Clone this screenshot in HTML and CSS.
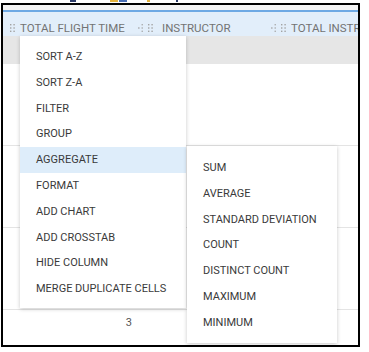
FILE: index.html
```html
<!DOCTYPE html>
<html lang="en">
<head>
    <meta charset="UTF-8">
    <meta name="viewport" content="width=device-width, initial-scale=1.0">
    <title>Column menu</title>
    <link rel="stylesheet" href="styles.css">
</head>
<body>
    <div class="topbits">
        <span class="bit dark" style="left: 70px; width: 6px;"></span>
        <span class="bit yellow" style="left: 110px; width: 8px;"></span>
        <span class="bit blue" style="left: 119px; width: 8px;"></span>
        <span class="bit yellow" style="left: 147px; width: 3px;"></span>
        <span class="bit dark" style="left: 176px; width: 2px;"></span>
    </div>

    <div class="frame">
        <div class="toolbar"></div>

        <div class="header">
            <div class="col">
                <svg class="drag" width="5" height="8" viewBox="0 0 5 8">
                    <rect x="0" y="0" width="1.4" height="1.4"/><rect x="3.4" y="0" width="1.4" height="1.4"/>
                    <rect x="0" y="3.3" width="1.4" height="1.4"/><rect x="3.4" y="3.3" width="1.4" height="1.4"/>
                    <rect x="0" y="6.6" width="1.4" height="1.4"/><rect x="3.4" y="6.6" width="1.4" height="1.4"/>
                </svg>
                <span>TOTAL FLIGHT TIME</span>
            </div>
            <div class="col">
                <svg class="resize" width="6" height="8" viewBox="0 0 6 8">
                    <rect x="0" y="3.4" width="1.6" height="1.2"/>
                    <rect x="3.6" y="0" width="1.2" height="1.4"/><rect x="3.6" y="3.3" width="1.2" height="1.4"/><rect x="3.6" y="6.6" width="1.2" height="1.4"/>
                </svg>
                <svg class="drag" width="5" height="8" viewBox="0 0 5 8">
                    <rect x="0" y="0" width="1.4" height="1.4"/><rect x="3.4" y="0" width="1.4" height="1.4"/>
                    <rect x="0" y="3.3" width="1.4" height="1.4"/><rect x="3.4" y="3.3" width="1.4" height="1.4"/>
                    <rect x="0" y="6.6" width="1.4" height="1.4"/><rect x="3.4" y="6.6" width="1.4" height="1.4"/>
                </svg>
                <span class="gap">INSTRUCTOR</span>
            </div>
            <div class="col last">
                <svg class="resize" width="6" height="8" viewBox="0 0 6 8">
                    <rect x="0" y="3.4" width="1.6" height="1.2"/>
                    <rect x="3.6" y="0" width="1.2" height="1.4"/><rect x="3.6" y="3.3" width="1.2" height="1.4"/><rect x="3.6" y="6.6" width="1.2" height="1.4"/>
                </svg>
                <svg class="drag" width="5" height="8" viewBox="0 0 5 8">
                    <rect x="0" y="0" width="1.4" height="1.4"/><rect x="3.4" y="0" width="1.4" height="1.4"/>
                    <rect x="0" y="3.3" width="1.4" height="1.4"/><rect x="3.4" y="3.3" width="1.4" height="1.4"/>
                    <rect x="0" y="6.6" width="1.4" height="1.4"/><rect x="3.4" y="6.6" width="1.4" height="1.4"/>
                </svg>
                <span class="clip">TOTAL INSTRUCTOR TIME</span>
            </div>
        </div>

        <div class="group-row"></div>
        <div class="row"></div>
        <div class="row"></div>
        <div class="row"></div>
        <div class="row">
            <div class="cell num">3</div>
        </div>

        <ul class="menu main-menu">
            <li>SORT A-Z</li>
            <li>SORT Z-A</li>
            <li>FILTER</li>
            <li>GROUP</li>
            <li class="active">AGGREGATE</li>
            <li>FORMAT</li>
            <li>ADD CHART</li>
            <li>ADD CROSSTAB</li>
            <li>HIDE COLUMN</li>
            <li>MERGE DUPLICATE CELLS</li>
        </ul>

        <ul class="menu sub-menu">
            <li>SUM</li>
            <li>AVERAGE</li>
            <li>STANDARD DEVIATION</li>
            <li>COUNT</li>
            <li>DISTINCT COUNT</li>
            <li>MAXIMUM</li>
            <li>MINIMUM</li>
        </ul>
    </div>
</body>
</html>
```

FILE: styles.css
```css
body {
    margin: 0;
    font-family: Roboto, "Liberation Sans", Arial, sans-serif;
    background: #fff;
}
.topbits {
    position: relative;
    height: 3px;
}
.bit {
    position: absolute;
    top: 0;
    height: 2px;
}
.bit.dark { background: #2b3a67; }
.bit.yellow { background: #e3b23c; }
.bit.blue { background: #4a6fb5; }
.frame {
    position: relative;
    margin-left: 1px;
    width: 355px;
    height: 340px;
    border: 2px solid #000;
    overflow: hidden;
}
.toolbar {
    height: 5px;
    background: #f4f4f4;
    border-bottom: 2px solid #6ea9e4;
}
.header {
    display: flex;
    height: 24px;
    padding-top: 7px;
    box-sizing: border-box;
    background: #e2eefa;
    color: #737373;
    font-size: 11.5px;
    white-space: nowrap;
}
.col {
    display: flex;
    align-items: center;
    flex: 0 0 133px;
    padding-left: 7px;
    box-sizing: border-box;
}
.col.last {
    flex: 1 1 auto;
    min-width: 0;
}
.col svg {
    fill: #a3a3a3;
    flex: none;
}
.drag {
    margin-right: 5px;
}
.resize {
    margin-left: -5px;
    margin-right: 4px;
}
.gap {
    margin-left: 4px;
}
.clip {
    overflow: hidden;
}
.group-row {
    height: 28px;
    background: #e6e6e6;
}
.row {
    display: flex;
    height: 81px;
    border-bottom: 1px solid #e4e4e4;
}
.cell {
    width: 133px;
    padding: 6px 4px;
    box-sizing: border-box;
    font-size: 11px;
    color: #555;
}
.num {
    text-align: right;
}
.menu {
    position: absolute;
    margin: 0;
    list-style: none;
    background: #fff;
    box-shadow: 0 1px 4px rgba(0,0,0,0.22);
    font-size: 11px;
    color: #3a3a3a;
}
.menu li {
    height: 25.8px;
    line-height: 25.8px;
    padding-left: 16px;
    white-space: nowrap;
}
.menu li.active {
    background: #deedfa;
}
.main-menu {
    left: 17px;
    top: 31px;
    width: 166px;
    padding: 8px 0 6px;
}
.sub-menu {
    left: 184px;
    top: 141px;
    width: 150px;
    padding: 9px 0 7px;
}
```
